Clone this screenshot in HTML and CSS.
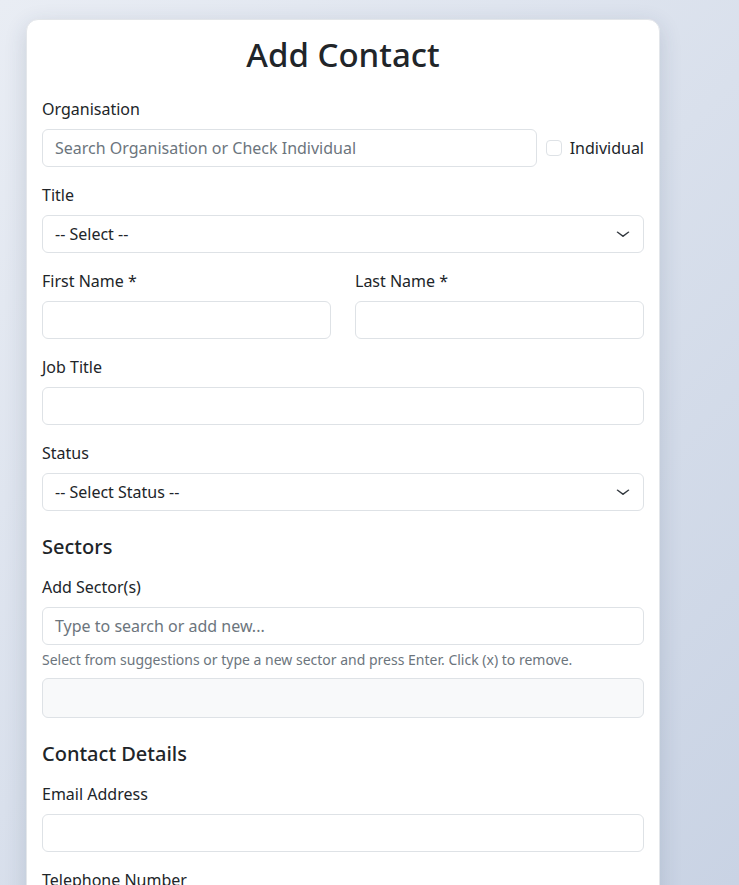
FILE: index.html
```html
<!DOCTYPE html>
<html lang="en">
<head>
<meta charset="utf-8">
<title>Add Contact</title>
<link rel="stylesheet" href="styles.css">
</head>
<body>
<div class="card">
  <h1 class="title">Add Contact</h1>

  <div class="group">
    <label class="label">Organisation</label>
    <div class="org-row">
      <div class="input placeholder grow">Search Organisation or Check Individual</div>
      <div class="check">
        <span class="box"></span>
        <span class="check-label">Individual</span>
      </div>
    </div>
  </div>

  <div class="group">
    <label class="label">Title</label>
    <div class="input select">
      <span>-- Select --</span>
      <svg class="chev" width="16" height="12" viewBox="0 0 16 16" preserveAspectRatio="none"><path d="M2.5 5.5l5.5 5.5 5.5-5.5" fill="none" stroke="#343a40" stroke-width="1.6" stroke-linecap="round" stroke-linejoin="round"/></svg>
    </div>
  </div>

  <div class="group row2">
    <div class="col">
      <label class="label">First Name *</label>
      <div class="input"></div>
    </div>
    <div class="col">
      <label class="label">Last Name *</label>
      <div class="input"></div>
    </div>
  </div>

  <div class="group">
    <label class="label">Job Title</label>
    <div class="input"></div>
  </div>

  <div class="group">
    <label class="label">Status</label>
    <div class="input select">
      <span>-- Select Status --</span>
      <svg class="chev" width="16" height="12" viewBox="0 0 16 16" preserveAspectRatio="none"><path d="M2.5 5.5l5.5 5.5 5.5-5.5" fill="none" stroke="#343a40" stroke-width="1.6" stroke-linecap="round" stroke-linejoin="round"/></svg>
    </div>
  </div>

  <h5 class="section">Sectors</h5>
  <div class="group">
    <label class="label">Add Sector(s)</label>
    <div class="input placeholder">Type to search or add new...</div>
    <div class="help">Select from suggestions or type a new sector and press Enter. Click (x) to remove.</div>
    <div class="tags"></div>
  </div>

  <h5 class="section">Contact Details</h5>
  <div class="group">
    <label class="label">Email Address</label>
    <div class="input"></div>
  </div>
  <div class="group">
    <label class="label">Telephone Number</label>
    <div class="input"></div>
  </div>
  <div class="group">
    <label class="label">Mobile Number</label>
    <div class="input"></div>
  </div>
</div>
</body>
</html>
```

FILE: styles.css
```css
html, body {
  margin: 0;
  height: 100%;
}
body {
  font-family: "Noto Sans", "Open Sans", sans-serif;
  color: #212529;
  background: linear-gradient(135deg, #e9edf4 0%, #d9e0ec 50%, #c9d3e4 100%);
  background-attachment: fixed;
  padding: 19px 0 0 26px;
  box-sizing: border-box;
  overflow: hidden;
}
.card {
  width: 634px;
  box-sizing: border-box;
  background: #fff;
  border: 1px solid #e3e6ea;
  border-radius: 12px;
  padding: 15px 15px 40px;
  box-shadow: 0 6px 22px rgba(40, 55, 90, 0.16);
}
.title {
  margin: 0 0 22px;
  text-align: center;
  font-size: 33px;
  font-weight: 500;
  line-height: 1.2;
}
.group {
  margin-bottom: 16px;
}
.label {
  display: block;
  font-size: 16px;
  line-height: 24px;
  margin-bottom: 8px;
}
.input {
  box-sizing: border-box;
  height: 38px;
  border: 1px solid #dee2e6;
  border-radius: 6px;
  padding: 6px 12px;
  font-size: 16px;
  line-height: 24px;
  background: #fff;
  color: #212529;
  white-space: nowrap;
  overflow: hidden;
}
.placeholder {
  color: #6c757d;
}
.grow {
  flex: 1;
}
.org-row {
  display: flex;
  align-items: center;
}
.check {
  display: flex;
  align-items: center;
  gap: 8px;
  margin-left: 9px;
}
.box {
  width: 16px;
  height: 16px;
  box-sizing: border-box;
  border: 1px solid #dee2e6;
  border-radius: 4px;
  background: #fff;
}
.check-label {
  font-size: 16px;
  line-height: 24px;
}
.select {
  display: flex;
  align-items: center;
  justify-content: space-between;
}
.chev {
  display: block;
  flex: none;
}
.row2 {
  display: grid;
  grid-template-columns: 1fr 1fr;
  column-gap: 24px;
}
.section {
  margin: 24px 0 16px;
  font-size: 20px;
  font-weight: 500;
  line-height: 1.2;
}
.help {
  margin-top: 4px;
  font-size: 14px;
  line-height: 21px;
  color: #6c757d;
}
.tags {
  margin-top: 8px;
  height: 40px;
  box-sizing: border-box;
  border: 1px solid #dee2e6;
  border-radius: 6px;
  background: #f8f9fa;
}
```
